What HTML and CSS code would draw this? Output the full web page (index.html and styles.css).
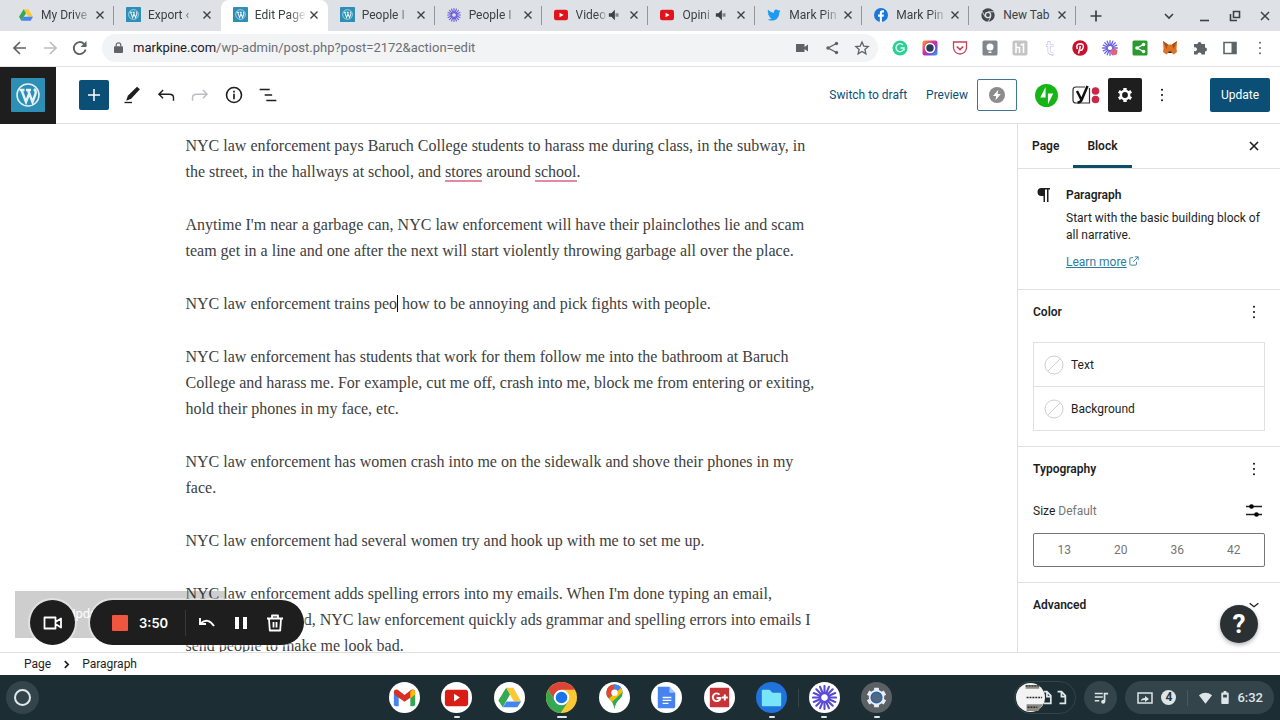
FILE: index.html
```html
<!DOCTYPE html>
<html lang="en">
<head>
<meta charset="UTF-8">
<meta name="viewport" content="width=device-width, initial-scale=1.0">
<title>Edit Page</title>
<link rel="stylesheet" href="styles.css">
</head>

<body>

<!-- shared icons -->
<svg class="sprite" aria-hidden="true">
    <symbol id="close" viewBox="0 0 14 14"><path d="M3.5 3.5l7 7M10.5 3.5l-7 7" stroke="currentColor" stroke-width="1.4"/></symbol>
    <symbol id="wp" viewBox="0 0 34 34">
        <rect width="34" height="34" rx="1" fill="#2d8fb5"/>
        <circle cx="17" cy="17" r="11" fill="none" stroke="#e4f2f8" stroke-width="1.5"/>
        <path d="M8.5 12h5M15 12h5M10.500 12l4.500 12 3-8M17 12l4.500 12 3-8q1-3-1.500-5" fill="none" stroke="#e4f2f8" stroke-width="2.4"/>
    </symbol>
    <symbol id="drive" viewBox="0 0 24 22">
        <path d="M8 1h8l8 13h-8z" fill="#fcc934"/>
        <path d="M8 1l4 7-8 13-4-7z" fill="#34a853"/>
        <path d="M8 14h16l-4 7H4z" fill="#4285f4"/>
    </symbol>
    <symbol id="burst" viewBox="0 0 24 24">
        <g stroke="currentColor" stroke-width="2" stroke-linecap="round">
            <path d="M12 1v7M12 16v7M1 12h7M16 12h7M4.200 4.200l5 5M14.800 14.800l5 5M19.800 4.200l-5 5M9.200 14.800l-5 5M7.800 1.800l2.700 6.500M13.500 15.700l2.700 6.500M16.200 1.800l-2.700 6.500M10.500 15.700l-2.700 6.500M1.800 7.800l6.500 2.700M15.700 13.500l6.500 2.700M1.800 16.200l6.500-2.700M15.700 10.500l6.500-2.700"/>
        </g>
    </symbol>
    <symbol id="youtube" viewBox="0 0 24 18"><rect width="24" height="18" rx="4" fill="#e1141c"/><path d="M9.500 5v8l7-4z" fill="#fff"/></symbol>
    <symbol id="sound" viewBox="0 0 14 14"><path d="M1 5h3l4-4v12L4 9H1z" fill="currentColor"/><path d="M9.500 5v4M11.500 5v4" stroke="currentColor"/></symbol>
    <symbol id="dots" viewBox="0 0 16 16"><circle cx="8" cy="2" r="1.1"/><circle cx="8" cy="8" r="1.1"/><circle cx="8" cy="14" r="1.1"/></symbol>
</svg>

<header class="tab-strip">
    <nav class="tabs">
        <div class="tab"><svg class="favicon"><use href="#drive"/></svg><span class="tab-title">My Drive</span><button class="tab-close" aria-label="Close tab"><svg><use href="#close"/></svg></button></div>
        <div class="tab before-active"><svg class="favicon wp"><use href="#wp"/></svg><span class="tab-title">Export ‹</span><button class="tab-close" aria-label="Close tab"><svg><use href="#close"/></svg></button></div>
        <div class="tab active"><svg class="favicon wp"><use href="#wp"/></svg><span class="tab-title">Edit Page</span><button class="tab-close" aria-label="Close tab"><svg><use href="#close"/></svg></button></div>
        <div class="tab"><svg class="favicon wp"><use href="#wp"/></svg><span class="tab-title">People I</span><button class="tab-close" aria-label="Close tab"><svg><use href="#close"/></svg></button></div>
        <div class="tab"><svg class="favicon burst"><use href="#burst"/></svg><span class="tab-title">People I</span><button class="tab-close" aria-label="Close tab"><svg><use href="#close"/></svg></button></div>
        <div class="tab"><svg class="favicon"><use href="#youtube"/></svg><span class="tab-title">Video</span><svg class="sound"><use href="#sound"/></svg><button class="tab-close" aria-label="Close tab"><svg><use href="#close"/></svg></button></div>
        <div class="tab"><svg class="favicon"><use href="#youtube"/></svg><span class="tab-title">Opini</span><svg class="sound"><use href="#sound"/></svg><button class="tab-close" aria-label="Close tab"><svg><use href="#close"/></svg></button></div>
        <div class="tab">
            <svg class="favicon" viewBox="0 0 24 24"><path d="M23 5l-2.500.7 2-2.500-3 1C15.500.5 11 3.500 12 8 8 8 4.500 6 2 3c-1.500 2.500-.5 5 1.500 6.500L1.500 9c0 2.500 1.500 4 4 5l-2 .2C4 16 6 17.300 8 17.500 6 19 3.500 19.700 1 19.500 11 25 21 19 21 8z" fill="#1d9bf0"/></svg>
            <span class="tab-title">Mark Pin</span><button class="tab-close" aria-label="Close tab"><svg><use href="#close"/></svg></button>
        </div>
        <div class="tab">
            <svg class="favicon" viewBox="0 0 24 24"><circle cx="12" cy="12" r="12" fill="#1877d8"/><path d="M10 24v-9H7v-4h3V8.500Q10 4 14.500 4H17v3.500h-2q-1.500 0-1.500 1.500v2H17l-.6 4h-2.900v9z" fill="#fff"/></svg>
            <span class="tab-title">Mark Pin</span><button class="tab-close" aria-label="Close tab"><svg><use href="#close"/></svg></button>
        </div>
        <div class="tab">
            <svg class="favicon" viewBox="0 0 24 24"><circle cx="12" cy="12" r="11.500" fill="#44484d"/><path d="M12 6.500h11M7 15L2 6M17 15l-5 9" stroke="#dee1e6" stroke-width="1.500"/><circle cx="12" cy="12" r="4.500" fill="#44484d" stroke="#dee1e6" stroke-width="2.500"/></svg>
            <span class="tab-title">New Tab</span><button class="tab-close" aria-label="Close tab"><svg><use href="#close"/></svg></button>
        </div>
    </nav>
    <button class="new-tab" aria-label="New tab"><svg viewBox="0 0 14 14"><path d="M7 1.500v11M1.500 7h11" stroke="currentColor" stroke-width="1.700"/></svg></button>
    <div class="window-controls">
        <button class="search-tabs" aria-label="Search tabs"><svg viewBox="0 0 14 14"><path d="M3 5l4 4 4-4" fill="none" stroke="currentColor" stroke-width="1.600"/></svg></button>
        <button aria-label="Minimize"><svg viewBox="0 0 14 14"><path d="M2 11.500h9" stroke="currentColor" stroke-width="1.600"/></svg></button>
        <button aria-label="Restore"><svg viewBox="0 0 14 14"><path d="M5.500 2.500h6v6h-6zM2.500 5v6.500H9" fill="none" stroke="currentColor" stroke-width="1.600"/></svg></button>
        <button aria-label="Close window"><svg viewBox="0 0 14 14"><path d="M3 3l8 8M11 3l-8 8" stroke="currentColor" stroke-width="1.500"/></svg></button>
    </div>
</header>

<div class="toolbar">
    <button aria-label="Back"><svg viewBox="0 0 16 16"><path d="M14 8H2.500M8 2L2 8l6 6" fill="none" stroke="currentColor" stroke-width="1.700"/></svg></button>
    <button class="faded" aria-label="Forward"><svg viewBox="0 0 16 16"><path d="M2 8h11.500M8 2l6 6-6 6" fill="none" stroke="currentColor" stroke-width="1.700"/></svg></button>
    <button aria-label="Reload"><svg viewBox="0 0 16 16"><path d="M13.600 9.500A6 6 0 1 1 12 3.800L14 6" fill="none" stroke="currentColor" stroke-width="1.900"/><path d="M14.500 1v6h-6z" fill="currentColor"/></svg></button>
    <div class="omnibox">
        <svg class="lock" viewBox="0 0 10 12"><path d="M1 4.500h8q1 0 1 1V11q0 1-1 1H1q-1 0-1-1V5.500q0-1 1-1z" fill="#5f6368"/><path d="M2.500 5V3a2.500 2.200 0 0 1 5 0v2" fill="none" stroke="#5f6368" stroke-width="1.300"/></svg>
        <a class="url" href="#"><span>markpine.com</span>/wp-admin/post.php?post=2172&amp;action=edit</a>
        <button aria-label="Camera"><svg viewBox="0 0 16 16"><path d="M2 4h8.500v8H2zM10.500 7L14 4.500v7L10.500 9z" fill="currentColor"/></svg></button>
        <button aria-label="Share"><svg viewBox="0 0 16 16"><path d="M12.500 3.500L4 8l8.500 4.500" fill="none" stroke="currentColor" stroke-width="1.400"/><g fill="currentColor"><circle cx="12.500" cy="3.500" r="1.700"/><circle cx="4" cy="8" r="1.700"/><circle cx="12.500" cy="12.500" r="1.700"/></g></svg></button>
        <button aria-label="Bookmark"><svg viewBox="0 0 16 16"><path d="M8 2l1.800 4.100 4.400.4-3.300 3 1 4.300L8 11.500l-3.900 2.300 1-4.300-3.300-3 4.400-.4z" fill="none" stroke="currentColor" stroke-width="1.300"/></svg></button>
    </div>
    <div class="extensions">
        <button aria-label="Grammarly"><svg viewBox="0 0 16 16"><circle cx="8" cy="8" r="7.500" fill="#2bcf96"/><path d="M11 5a4 4 0 1 0 1 3H8.500M12 8v2.500" fill="none" stroke="#d9fff2" stroke-width="1.400"/></svg></button>
        <button aria-label="Screenshot">
            <svg viewBox="0 0 16 16"><defs><linearGradient id="rainbow" x2="1" y2="1"><stop stop-color="#f5a623"/><stop offset=".4" stop-color="#e0318c"/><stop offset=".7" stop-color="#7a43e0"/><stop offset="1" stop-color="#28b8e8"/></linearGradient></defs><rect x=".5" y=".5" width="15" height="15" rx="2" fill="url(#rainbow)"/><circle cx="8" cy="8" r="4.500" fill="#263c58" stroke="#fff" stroke-width="1.600"/></svg>
        </button>
        <button aria-label="Pocket"><svg viewBox="0 0 16 16"><path d="M1.500 2h13v5.500a6.500 6.500 0 0 1-13 0z" fill="#fff" stroke="#c9405c" stroke-width="1.300"/><path d="M4.800 6.500L8 9.500l3.200-3" fill="none" stroke="#c9405c" stroke-width="1.700"/></svg></button>
        <button aria-label="Keep"><svg viewBox="0 0 16 16"><rect x=".5" y=".5" width="15" height="15" rx="1.500" fill="#80868b"/><circle cx="8" cy="7" r="3.500" fill="#fff"/><path d="M6.500 11.500h3v1.500h-3z" fill="#fff"/></svg></button>
        <button aria-label="Honey"><svg viewBox="0 0 16 16"><rect x=".5" y=".5" width="15" height="15" rx="2" fill="#c4c4c4"/><path d="M4 3v10M4 7.500h3.500V13M8.500 5l3-1v9" fill="none" stroke="#fff" stroke-width="1.600"/></svg></button>
        <button aria-label="Tumblr"><svg viewBox="0 0 16 16"><path d="M7 1v10q0 3.500 4.500 3M4 5.500h7.500" fill="none" stroke="#c8cdea" stroke-width="3.200"/><path d="M7 2v9q0 3 4 2.500M4.500 5.500H11" fill="none" stroke="#fff" stroke-width="1.600"/></svg></button>
        <button aria-label="Pinterest"><svg viewBox="0 0 16 16"><circle cx="8" cy="8" r="7.700" fill="#c8102e"/><path d="M5.300 9Q3.500 4 8 3.700q3.800 0 3.300 3.500Q10.500 11 7.500 10M8.300 6L6.500 13.500" fill="none" stroke="#fff" stroke-width="1.500"/></svg></button>
        <button class="burst" aria-label="Loom"><svg viewBox="0 0 24 24"><use href="#burst"/><circle cx="18" cy="18" r="5" fill="#e36380"/></svg></button>
        <button aria-label="Share page"><svg viewBox="0 0 16 16"><rect x=".5" y=".5" width="15" height="15" rx="1.500" fill="#2b9a2e"/><path d="M11.500 4.500L5 8l6.500 3.500" fill="none" stroke="#fff" stroke-width="1.400"/><g fill="#fff"><circle cx="11.500" cy="4.500" r="1.800"/><circle cx="5" cy="8" r="1.800"/><circle cx="11.500" cy="11.500" r="1.800"/></g></svg></button>
        <button aria-label="MetaMask"><svg viewBox="0 0 16 16"><path d="M1 1l5 3.500h4L15 1l-.5 8 .5 3-3.500 2.500L10 13H6l-1.500 1.500L1 12l.5-3z" fill="#dc7324"/><path d="M1 1l5 3.500L4.500 9zM15 1l-5 3.500L11.500 9z" fill="#a5501e"/><path d="M6.500 11.500h3V13h-3z" fill="#2b2b2b"/></svg></button>
        <button aria-label="Extensions"><svg viewBox="0 0 16 16"><path d="M2 4h3.500a2 2 0 1 1 4 0H13v3.500a2 2 0 1 1 0 4V14.500H9.500a2 2 0 1 0-4 0H2V11a2 2 0 1 0 0-3.500z" fill="currentColor"/></svg></button>
        <button aria-label="Side panel"><svg viewBox="0 0 16 16"><path d="M2 2.500h12v11H2z" fill="none" stroke="currentColor" stroke-width="1.600"/><path d="M9.500 2.500H14v11H9.500z" fill="currentColor"/></svg></button>
        <button class="menu" aria-label="Menu"><svg fill="#5f6368"><use href="#dots"/></svg></button>
    </div>
</div>

<div class="editor-header">
    <a class="site-icon" href="#" aria-label="View pages"><svg><use href="#wp"/></svg></a>
    <div class="document-tools">
        <button class="inserter" aria-label="Add block"><svg viewBox="0 0 24 24"><path d="M12 6v12M6 12h12" stroke="currentColor" stroke-width="1.500"/></svg></button>
        <button aria-label="Tools"><svg viewBox="0 0 24 24"><path d="M18 2l3.500 3L11 16.500l-6 2.500 2-6z" fill="currentColor"/><path d="M3 21h9" stroke="currentColor" stroke-width="1.600"/></svg></button>
        <button aria-label="Undo"><svg viewBox="0 0 24 24"><path d="M8.500 6L3.500 11l5 5M4 11h12q5 0 5 4v4" fill="none" stroke="currentColor" stroke-width="1.700"/></svg></button>
        <button class="faded" aria-label="Redo"><svg viewBox="0 0 24 24"><path d="M15.500 6l5 5-5 5M20 11H8q-5 0-5 4v4" fill="none" stroke="currentColor" stroke-width="1.700"/></svg></button>
        <button aria-label="Details"><svg viewBox="0 0 24 24"><circle cx="12" cy="12" r="9" fill="none" stroke="currentColor" stroke-width="1.900"/><path d="M12 10.500V17M12 7v2" stroke="currentColor" stroke-width="2"/></svg></button>
        <button aria-label="List view"><svg viewBox="0 0 24 24"><path d="M2 5.500h12M8 12h9M10 18.500h12" stroke="currentColor" stroke-width="1.800"/></svg></button>
    </div>
    <div class="header-settings">
        <button class="text-button">Switch to draft</button>
        <button class="text-button">Preview</button>
        <button class="amp" aria-label="AMP preview"><svg viewBox="0 0 18 18"><circle cx="9" cy="9" r="9" fill="#8c8c8c"/><path d="M10.500 3L4.500 10h3.500l-.7 5 6-7H9.700z" fill="#fff"/></svg></button>
        <button class="jetpack" aria-label="Jetpack"><svg viewBox="0 0 24 24"><circle cx="12" cy="12" r="12" fill="#16b516"/><path d="M11 3v11H5.500zM13.500 21V10H19z" fill="#fff"/></svg></button>
        <button class="yoast" aria-label="Yoast SEO"><svg viewBox="0 0 28 20"><path d="M17.500 3V18H4q-3 0-3-3V5q0-3 3-3h9" fill="none" stroke="#333" stroke-width="1.200"/><path d="M5 6l4 8M15.500 1L10 14q-1.300 3.500-4.500 3.500" fill="none" stroke="#111" stroke-width="2.500"/><circle cx="23.500" cy="6" r="3.800" fill="#c8284a"/><circle cx="23.500" cy="14.500" r="3.800" fill="#c8284a"/></svg></button>
        <button class="settings" aria-label="Settings"><svg viewBox="0 0 24 24"><circle cx="12" cy="12" r="5" fill="none" stroke="currentColor" stroke-width="3"/><path d="M12 3.500V7M12 17v3.500M4.600 7.700l3 1.800M16.400 14.500l3 1.800M4.600 16.300l3-1.800M16.400 9.500l3-1.800" stroke="currentColor" stroke-width="4"/></svg></button>
        <button class="options" aria-label="Options"><svg><use href="#dots"/></svg></button>
        <button class="update">Update</button>
    </div>
</div>

<div class="workspace">
    <main class="canvas">
        <article class="post">
            <p>NYC law enforcement pays Baruch College students to harass me during class, in the subway, in<br>the street, in the hallways at school, and <span class="suggestion">stores</span> around <span class="suggestion">school</span>.</p>
            <p>Anytime I'm near a garbage can, NYC law enforcement will have their plainclothes lie and scam<br>team get in a line and one after the next will start violently throwing garbage all over the place.</p>
            <p>NYC law enforcement trains peo<span class="caret"></span> how to be annoying and pick fights with people.</p>
            <p>NYC law enforcement has students that work for them follow me into the bathroom at Baruch<br>College and harass me. For example, cut me off, crash into me, block me from entering or exiting,<br>hold their phones in my face, etc.</p>
            <p>NYC law enforcement has women crash into me on the sidewalk and shove their phones in my<br>face.</p>
            <p>NYC law enforcement had several women try and hook up with me to set me up.</p>
            <p>NYC law enforcement adds spelling errors into my emails. When I'm done typing an email,<br>and it is all finished, NYC law enforcement quickly ads grammar and spelling errors into emails I<br>send people to make me look bad.</p>
        </article>
    </main>

    <aside class="sidebar">
        <div class="sidebar-tabs">
            <button>Page</button>
            <button class="selected">Block</button>
            <button class="sidebar-close" aria-label="Close settings"><svg><use href="#close"/></svg></button>
        </div>
        <section class="block-card">
            <svg class="pilcrow" viewBox="0 0 14 16"><path d="M7.500 1H14v1.500h-1.500V15H11V2.500H9V15H7.500V9H5.500a4 4 0 0 1 0-8z" fill="#1e1e1e"/></svg>
            <div>
                <h2>Paragraph</h2>
                <p>Start with the basic building block of all narrative.</p>
                <a href="#">Learn more</a><svg class="external" viewBox="0 0 12 12"><path d="M5 2H2.500Q1 2 1 3.500v6Q1 11 2.500 11h5Q9 11 9 9.500V7M7 1h4v4M11 1L5 7" fill="none" stroke="#2d7f9d" stroke-width="1.100"/></svg>
            </div>
        </section>
        <section class="panel">
            <div class="panel-title"><h2>Color</h2><button aria-label="Color options"><svg><use href="#dots"/></svg></button></div>
            <div class="color-list">
                <button><svg viewBox="0 0 20 20"><circle cx="10" cy="10" r="9"/><path d="M4 16L16 4"/></svg>Text</button>
                <button><svg viewBox="0 0 20 20"><circle cx="10" cy="10" r="9"/><path d="M4 16L16 4"/></svg>Background</button>
            </div>
        </section>
        <section class="panel">
            <div class="panel-title"><h2>Typography</h2><button aria-label="Typography options"><svg><use href="#dots"/></svg></button></div>
            <div class="size-label"><span>Size <em>Default</em></span><button aria-label="Set custom size"><svg viewBox="0 0 16 14"><path d="M0 2.500h16M0 10.500h16" stroke="#1e1e1e" stroke-width="1.500"/><circle cx="5.500" cy="2.500" r="2.300"/><circle cx="10.500" cy="10.500" r="2.300"/></svg></button></div>
            <div class="sizes"><button>13</button><button>20</button><button>36</button><button>42</button></div>
        </section>
        <section class="panel advanced">
            <div class="panel-title"><h2>Advanced</h2><button aria-label="Toggle advanced"><svg viewBox="0 0 16 16"><path d="M3 6l5 4 5-4" fill="none" stroke="#1e1e1e" stroke-width="1.500"/></svg></button></div>
        </section>
        <button class="help" aria-label="Help">?</button>
    </aside>

    <!-- screen recorder floats over the saving notice -->
    <div class="notice">Updating</div>
    <div class="recorder">
        <button class="camera" aria-label="Camera"><svg viewBox="0 0 20 16"><path d="M1.500 2.500h11v11h-11zM12.500 7L18 3.500v9L12.500 9" fill="none" stroke="#fff" stroke-width="1.800" stroke-linejoin="round"/></svg></button>
        <div class="recorder-bar">
            <button class="stop" aria-label="Stop"></button>
            <time>3:50</time>
            <button class="restart" aria-label="Restart"><svg viewBox="0 0 18 18"><path d="M2 4v6h6M2.500 9.500Q10 3 16 12" fill="none" stroke="#fff" stroke-width="1.900"/></svg></button>
            <button aria-label="Pause"><svg viewBox="0 0 18 18"><path d="M5 3v12M13 3v12" stroke="#fff" stroke-width="4"/></svg></button>
            <button aria-label="Delete"><svg viewBox="0 0 18 18"><path d="M1 4.500h16M6 4V1.500h6V4M3 5l.8 11.500h10.400L15 5M7.500 8v5.500M10.500 8v5.500" fill="none" stroke="#fff" stroke-width="1.800" stroke-linejoin="round"/></svg></button>
        </div>
    </div>
</div>

<footer class="breadcrumbs">
    <a href="#">Page</a>
    <svg viewBox="0 0 8 8"><path d="M2.500 1l3 3-3 3" fill="none" stroke="#1e1e1e" stroke-width="1.500"/></svg>
    <a href="#">Paragraph</a>
</footer>

<div class="shelf">
    <button class="launcher" aria-label="Launcher"></button>
    <div class="apps">
        <button aria-label="Gmail"><svg viewBox="0 0 32 32"><circle cx="16" cy="16" r="16" fill="#fff"/><path d="M5 11h5v14H7q-2 0-2-2z" fill="#4285f4"/><path d="M22 11h5v12q0 2-2 2h-3z" fill="#34a853"/><path d="M5 11q0-4 4-3l7 5.500L23 8q4-1 4 3l-1 2.500-10 7-10-7z" fill="#d93025"/><path d="M22 10l2-2q3 0 3 3v2l-5 4z" fill="#fbbc04"/></svg></button>
        <button class="running" aria-label="YouTube"><svg viewBox="0 0 32 32"><circle cx="16" cy="16" r="16" fill="#fff"/><rect x="4" y="8" width="24" height="17" rx="3" fill="#d91c16"/><path d="M13.500 12v8l6-4z" fill="#fff"/></svg></button>
        <button aria-label="Drive"><svg viewBox="0 0 32 32"><circle cx="16" cy="16" r="16" fill="#fff"/><path d="M12.500 6h7.500l8 14h-7.500z" fill="#fcc934"/><path d="M12.500 6l4 7L9 26l-4.500-7z" fill="#34a853"/><path d="M13 20h15l-4 6H9z" fill="#4285f4"/></svg></button>
        <button class="running wide" aria-label="Chrome"><svg viewBox="0 0 32 32"><circle cx="16" cy="16" r="16" fill="#fbc934"/><path d="M2.200 8A16 16 0 0 1 29.800 8H16L9 19z" fill="#db4437"/><path d="M2.200 8A16 16 0 0 0 15 32l8-12-14-1z" fill="#34a853"/><circle cx="16" cy="16" r="7" fill="#1a73e8" stroke="#fff" stroke-width="2"/></svg></button>
        <button aria-label="Maps"><svg viewBox="0 0 32 32"><defs><clipPath id="pin"><path d="M16 28Q15 21 10 17a8.500 8.500 0 1 1 12 0Q17 21 16 28z"/></clipPath></defs><circle cx="16" cy="16" r="16" fill="#fff"/><g clip-path="url(#pin)"><path d="M4 2h24v28H4z" fill="#34a853"/><path d="M4 2h12v8L6 20z" fill="#ea4335"/><path d="M16 2h12v6L16 13z" fill="#4285f4"/><path d="M6 21L24 5l2 4-15 14z" fill="#fbbc04"/><path d="M16 2h9l-9 10z" fill="#4285f4"/></g><circle cx="16" cy="11" r="3.300" fill="#fff"/></svg></button>
        <button aria-label="Docs"><svg viewBox="0 0 32 32"><circle cx="16" cy="16" r="16" fill="#fff"/><path d="M8 5h11l6 6v14q0 2-2 2H8q-1 0-1-1V6q0-1 1-1z" fill="#4682f0"/><path d="M19 5l6 6h-6z" fill="#a7c5fb"/><path d="M12 16h9M12 19h9M12 22h6" stroke="#fff" stroke-width="1.400"/></svg></button>
        <button aria-label="Google Plus"><svg viewBox="0 0 32 32"><circle cx="16" cy="16" r="16" fill="#fff"/><rect x="6" y="6" width="20" height="20" rx="1" fill="#c63437"/><path d="M16 13a4 4 0 1 0 1 3.500h-4M21.500 13v6M18.500 16h6" fill="none" stroke="#fff" stroke-width="2"/></svg></button>
        <button class="running" aria-label="Files"><svg viewBox="0 0 32 32"><circle cx="16" cy="16" r="16" fill="#2272dc"/><path d="M7 8h7l3 3h8q1 0 1 1v12q0 1-1 1H7q-1 0-1-1V9q0-1 1-1z" fill="#79e5f8"/></svg></button>
        <button class="running divided" aria-label="Loom"><svg viewBox="0 0 32 32" color="#594bd2"><circle cx="16" cy="16" r="16" fill="#fff"/><use href="#burst" x="3" y="3" width="26" height="26"/></svg></button>
        <button class="running" aria-label="Settings"><svg viewBox="0 0 32 32"><circle cx="16" cy="16" r="16" fill="#5a6064"/><circle cx="16" cy="16" r="8" fill="#e8eef6"/><path d="M16 6v20M7.300 11l17.400 10M24.700 11L7.300 21" stroke="#e8eef6" stroke-width="5"/><circle cx="16" cy="16" r="5.500" fill="#506884" stroke="#2d63a8" stroke-width="1.500"/></svg></button>
    </div>
    <div class="tray">
        <button class="holding" aria-label="Recent files">
            <svg viewBox="0 0 60 32"><circle cx="15" cy="16" r="15" fill="#f2f3f2"/><path d="M10 3h14v4H10zM11 23h17l-5 7H11z" fill="#8a8a80"/><path d="M11 16h16M10 4h14M12 26h10" stroke="#292c28" stroke-width="1.500" stroke-dasharray="2 1"/><path d="M29 10h3l4 4v8h-7M43 10h4l4 4v8h-6M32 10v5h4M47 10v5h4" fill="none" stroke="#e0e8e9" stroke-width="1.800"/></svg>
        </button>
        <button class="media" aria-label="Media controls"><svg viewBox="0 0 18 18"><path d="M2 4h9M2 8h9M2 12h5" stroke="#dce5e8" stroke-width="1.700"/><path d="M13 13V4h4" fill="none" stroke="#dce5e8" stroke-width="1.900"/><circle cx="11.500" cy="13.300" r="2.300" fill="#dce5e8"/></svg></button>
        <button class="status">
            <svg viewBox="0 0 16 14"><path d="M1 2h14v10H1z" fill="none" stroke="#dce5e8" stroke-width="1.500"/><path d="M4 10q0-3 4-3V5l4 3-4 3V9Q5 9 4 10z" fill="#dce5e8"/></svg>
            <span class="count">4</span>
            <svg class="wifi" viewBox="0 0 16 14"><path d="M1 4Q8-1 15 4L8 13z" fill="#dce5e8"/></svg>
            <svg class="battery" viewBox="0 0 8 14"><path d="M2.500 0h3v1.500H7q1 0 1 1V13q0 1-1 1H1q-1 0-1-1V2.500q0-1 1-1h1.500z" fill="#dce5e8"/><path d="M2 4h4v3H2z" fill="#34444b"/></svg>
            <span class="clock">6:32</span>
        </button>
    </div>
</div>

</body>
</html>
```
FILE: styles.css
```css
* {
    box-sizing: border-box;
}

body {
    margin: 0;
    height: 100vh;
    display: flex;
    flex-direction: column;
    overflow: hidden;
    font-family: Roboto, sans-serif;
    font-size: 12px;
    color: #1e1e1e;
    background: #fff;
}

button {
    border: none;
    padding: 0;
    background: none;
    font: inherit;
    color: inherit;
    cursor: pointer;
    display: flex;
    align-items: center;
    justify-content: center;
    flex-shrink: 0;
}

svg {
    display: block;
    width: 16px;
    height: 16px;
    flex-shrink: 0;
}

h2,
p {
    margin: 0;
}

h2 {
    font-size: 12px;
    font-weight: 600;
    line-height: 16px;
}

.sprite {
    position: absolute;
    width: 0;
    height: 0;
}

.burst,
.toolbar .burst {
    color: #6e61dc;
}

/* Tab strip */
.tab-strip {
    display: flex;
    height: 31px;
    flex-shrink: 0;
    background: #dee1e6;
    color: #3c4043;
}

.tabs {
    display: flex;
    flex: 0 1 1076px;
    min-width: 0;
    padding-left: 7px;
}

.tab {
    flex: 1;
    min-width: 0;
    display: flex;
    align-items: center;
    padding: 0 7px 2px 12px;
    position: relative;
}

.tab::after {
    content: "";
    position: absolute;
    right: 0;
    top: 6px;
    height: 19px;
    border-right: 1px solid #92969b;
}

.tab.active::after,
.tab.before-active::after {
    display: none;
}

.tab.active {
    background: #fff;
    border-radius: 8px 8px 0 0;
}

.favicon {
    width: 14px;
    height: 14px;
    margin-right: 8px;
}

.favicon.wp {
    width: 15px;
    height: 15px;
    margin-right: 7px;
}

.tab-title {
    flex: 1;
    min-width: 0;
    overflow: hidden;
    white-space: nowrap;
    line-height: 16px;
    -webkit-mask-image: linear-gradient(to right, #000 65%, transparent);
    mask-image: linear-gradient(to right, #000 65%, transparent);
}

.tab:last-child .tab-title {
    -webkit-mask-image: none;
    mask-image: none;
}

.sound {
    width: 12px;
    height: 12px;
    margin-right: 7px;
}

.tab-close svg {
    width: 14px;
    height: 14px;
}

.new-tab {
    width: 40px;
}

.new-tab svg,
.window-controls svg {
    width: 14px;
    height: 14px;
}

.window-controls {
    display: flex;
    margin-left: auto;
}

.window-controls button {
    width: 30px;
}

.window-controls .search-tabs {
    width: 42px;
}

/* Address bar */
.toolbar {
    display: flex;
    align-items: center;
    height: 36px;
    flex-shrink: 0;
    padding: 0 5px 2px;
    border-bottom: 1px solid #dfe1e5;
    color: #5f6368;
}

.toolbar button {
    width: 30px;
    height: 28px;
}

.faded,
.toolbar .faded {
    color: #bbbdc0;
}

.omnibox {
    flex: 1;
    display: flex;
    align-items: center;
    height: 28px;
    margin: 0 7px;
    padding: 0 1px 0 12px;
    border-radius: 14px;
    background: #f1f3f4;
}

.lock {
    width: 9px;
    height: 11px;
    margin-right: 10px;
}

.url {
    flex: 1;
    font-size: 13px;
    color: #6b6f74;
    text-decoration: none;
}

.url span {
    color: #202124;
}

.extensions {
    display: flex;
}

.toolbar .menu svg {
    width: 14px;
    height: 14px;
}

/* Editor header */
.editor-header {
    display: flex;
    align-items: center;
    height: 57px;
    flex-shrink: 0;
    border-bottom: 1px solid #e0e0e0;
}

.site-icon {
    display: flex;
    align-items: center;
    justify-content: center;
    width: 56px;
    height: 57px;
    background: #1e1e1e;
}

.site-icon svg {
    width: 34px;
    height: 34px;
}

.document-tools {
    display: flex;
    align-items: center;
    margin-left: 23px;
}

.document-tools button {
    width: 34px;
    height: 30px;
}

.document-tools svg {
    width: 20px;
    height: 20px;
}

.document-tools .inserter {
    width: 30px;
    margin-right: 6px;
    border-radius: 2px;
    background: #0b4f77;
    color: #fff;
}

.document-tools .inserter svg {
    width: 24px;
    height: 24px;
}

.header-settings {
    display: flex;
    align-items: center;
    margin-left: auto;
    padding-right: 10px;
}

.text-button {
    margin-left: 19px;
    color: #0b4f77;
}

.amp {
    width: 40px;
    height: 32px;
    margin-left: 9px;
    border: 1px solid #3f7695;
    border-radius: 2px;
}

.jetpack {
    margin-left: 18px;
}

.jetpack svg {
    width: 23px;
    height: 23px;
}

.yoast {
    margin-left: 14px;
}

.yoast svg {
    width: 28px;
    height: 20px;
}

.settings {
    width: 34px;
    height: 34px;
    margin-left: 8px;
    border-radius: 2px;
    background: #1e1e1e;
    color: #fff;
}

.settings svg {
    width: 20px;
    height: 20px;
}

.options {
    width: 40px;
    height: 34px;
    margin-right: 28px;
}

.options svg {
    width: 16px;
    height: 14px;
}

.update {
    width: 60px;
    height: 34px;
    border-radius: 2px;
    background: #0b4f77;
    color: #fff;
}

/* Workspace */
.workspace {
    flex: 1;
    min-height: 0;
    display: flex;
    position: relative;
}

.canvas {
    flex: 1;
    min-width: 0;
    overflow: hidden;
}

.post {
    max-width: 646px;
    margin: 0 auto;
    padding-top: 9px;
    font-family: "Liberation Serif", serif;
    font-size: 16px;
    line-height: 26px;
    color: #404040;
    white-space: nowrap;
}

.post p {
    margin-bottom: 27px;
}

.suggestion {
    border-bottom: 2px solid #e08ba3;
}

.caret {
    border-right: 1px solid #000;
}

.sidebar {
    width: 263px;
    flex-shrink: 0;
    border-left: 1px solid #e0e0e0;
    position: relative;
}

.sidebar-tabs {
    display: flex;
    height: 45px;
    border-bottom: 1px solid #e0e0e0;
    font-weight: 600;
}

.sidebar-tabs button {
    padding: 0 14px;
}

.sidebar-tabs .selected {
    border-bottom: 3px solid #0b4f67;
    padding-top: 3px;
}

.sidebar-tabs .sidebar-close {
    margin-left: auto;
    padding: 0 18px;
}

.block-card {
    display: flex;
    gap: 16px;
    padding: 18px 14px 0 18px;
    height: 121px;
    border-bottom: 1px solid #e0e0e0;
}

.pilcrow {
    width: 14px;
}

.block-card p {
    margin: 7px 0 11px;
    line-height: 17px;
}

.block-card a {
    color: #2d7f9d;
}

.external {
    display: inline-block;
    width: 10px;
    height: 10px;
    margin-left: 2px;
}

.panel {
    padding: 14px 15px 15px;
    border-bottom: 1px solid #e0e0e0;
}

.panel-title {
    display: flex;
    justify-content: space-between;
    align-items: center;
    padding-right: 3px;
}

.panel-title svg {
    width: 16px;
    height: 14px;
}

.color-list {
    margin-top: 22px;
    border: 1px solid #e0e0e0;
}

.color-list button {
    width: 100%;
    height: 43px;
    justify-content: flex-start;
    gap: 7px;
    padding-left: 10px;
}

.color-list button + button {
    height: 44px;
    border-top: 1px solid #e0e0e0;
}

.color-list svg {
    width: 20px;
    height: 20px;
    fill: none;
    stroke: #cfcfcf;
}

.size-label {
    display: flex;
    justify-content: space-between;
    align-items: center;
    margin-top: 26px;
    padding-right: 3px;
}

.size-label em {
    font-style: normal;
    color: #757575;
}

.sizes {
    display: flex;
    height: 34px;
    margin-top: 14px;
    padding: 0 2px;
    border: 1px solid #757575;
    border-radius: 2px;
    color: #757575;
}

.sizes button {
    flex: 1;
}

.advanced {
    border-bottom: none;
}

.help {
    position: absolute;
    right: 22px;
    bottom: 9px;
    width: 38px;
    height: 38px;
    border-radius: 50%;
    background: #2b3033;
    box-shadow: 0 2px 4px rgba(0, 0, 0, 0.3);
    color: #fff;
    font-size: 26px;
    font-weight: 700;
}

/* Screen recorder */
.notice {
    position: absolute;
    left: 15px;
    bottom: 14px;
    width: 210px;
    height: 47px;
    padding-left: 52px;
    background: rgba(30, 30, 30, 0.22);
    color: #fff;
    font-size: 13px;
    line-height: 46px;
}

.recorder {
    position: absolute;
    left: 30px;
    bottom: 7px;
    display: flex;
    gap: 15px;
}

.recorder svg {
    width: 18px;
    height: 18px;
}

.camera,
.recorder-bar {
    height: 45px;
    border-radius: 23px;
    background: #1e1e1e;
    box-shadow: 0 0 0 2px rgba(255, 255, 255, 0.4);
}

.camera {
    width: 45px;
}

.camera svg {
    width: 20px;
}

.recorder-bar {
    display: flex;
    align-items: center;
    gap: 16px;
    padding: 0 20px 0 22px;
    color: #fff;
}

.stop {
    width: 16px;
    height: 16px;
    border-radius: 1px;
    background: #f0563f;
}

.recorder time {
    width: 30px;
    margin-left: -5px;
    font-family: Inter, sans-serif;
    font-size: 13px;
    font-weight: 600;
}

.restart {
    height: 26px;
    padding-left: 12px;
    border-left: 1px solid #383838;
}

/* Breadcrumbs */
.breadcrumbs {
    display: flex;
    align-items: center;
    gap: 11px;
    height: 23px;
    flex-shrink: 0;
    padding-left: 24px;
    border-top: 1px solid #e0e0e0;
}

.breadcrumbs a {
    color: #1e1e1e;
    text-decoration: none;
}

.breadcrumbs svg {
    width: 9px;
    height: 9px;
}

/* Shelf */
.shelf {
    display: grid;
    grid-template-columns: 1fr 526px 1fr;
    align-items: center;
    height: 45px;
    flex-shrink: 0;
    padding: 0 6px;
    background: #1c2d33;
    color: #dce5e8;
}

.launcher {
    width: 33px;
    height: 33px;
    border-radius: 50%;
    background: #34444b;
}

.launcher::before {
    content: "";
    width: 13px;
    height: 13px;
    border: 2px solid #e0e8ea;
    border-radius: 50%;
}

.apps {
    display: grid;
    grid-template-columns: repeat(10, 1fr);
    padding-left: 1px;
}

.apps button {
    height: 45px;
    position: relative;
}

.apps svg {
    width: 31px;
    height: 31px;
}

.running::after {
    content: "";
    position: absolute;
    bottom: 2px;
    width: 6px;
    height: 2px;
    border-radius: 1px;
    background: #e0e8ea;
}

.running.wide::after {
    width: 10px;
}

.divided::before {
    content: "";
    position: absolute;
    left: 0;
    height: 18px;
    border-left: 1px solid #34444b;
}

.tray {
    display: flex;
    justify-content: flex-end;
    gap: 8px;
}

.holding {
    height: 33px;
    border: 1px solid #34444b;
    border-radius: 17px;
}

.holding svg {
    width: 60px;
    height: 31px;
}

.media {
    width: 33px;
    height: 33px;
    border-radius: 50%;
    background: #34444b;
}

.status {
    gap: 8px;
    height: 33px;
    padding: 0 11px 0 12px;
    border-radius: 17px;
    background: #34444b;
}

.count {
    width: 15px;
    margin-right: 3px;
    border-radius: 50%;
    background: #dce5e8;
    color: #26373e;
    font-weight: 700;
    line-height: 15px;
}

.wifi {
    width: 26px;
    padding-left: 10px;
    border-left: 1px solid #4b5a60;
}

.battery {
    width: 8px;
    height: 13px;
}

.clock {
    font-size: 13px;
    font-weight: 500;
}
```
